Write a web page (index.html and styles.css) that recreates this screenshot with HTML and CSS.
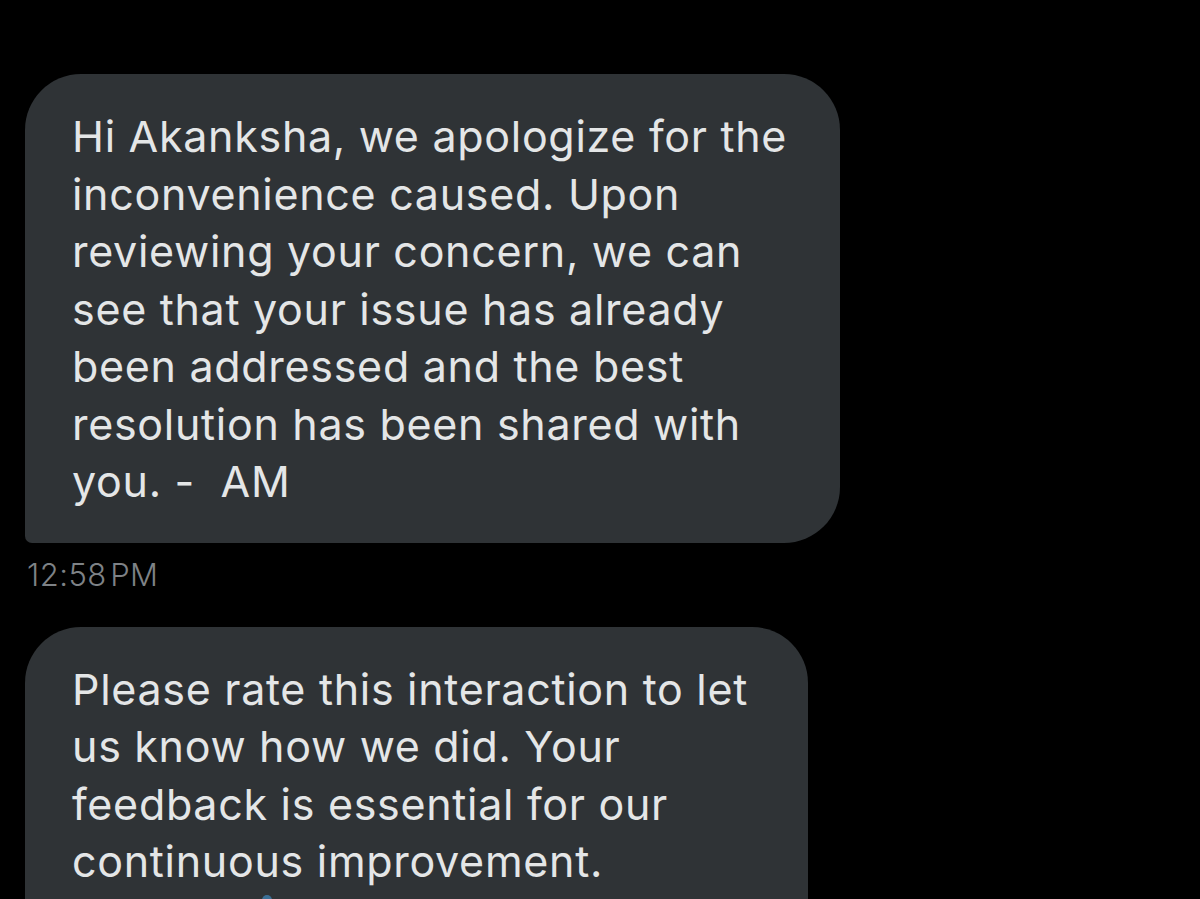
FILE: index.html
```html
<!DOCTYPE html>
<html lang="en">
<head>
  <meta charset="UTF-8">
  <title>Messages</title>
  <link rel="stylesheet" href="styles.css">
</head>
<body>
  <div class="thread">
    <div class="msg">
      <div class="bubble bubble-first">
        Hi Akanksha, we apologize for the<br>
        inconvenience caused. Upon<br>
        reviewing your concern, we can<br>
        see that your issue has already<br>
        been addressed and the best<br>
        resolution has been shared with<br>
        you. -&nbsp; AM
      </div>
      <div class="time">12:58&#8202;PM</div>
    </div>
    <div class="msg">
      <div class="bubble bubble-second">
        Please rate this interaction to let<br>
        us know how we did. Your<br>
        feedback is essential for our<br>
        continuous improvement.<br>
        <span class="link-peek"></span>
      </div>
    </div>
  </div>
</body>
</html>
```

FILE: styles.css
```css
html, body {
  margin: 0;
  padding: 0;
  background: #000;
  height: 100%;
  overflow: hidden;
}
body {
  font-family: Inter, Roboto, 'Liberation Sans', Arial, sans-serif;
}
.thread {
  padding: 74px 0 0 25px;
  display: flex;
  flex-direction: column;
}
.msg {
  display: flex;
  flex-direction: column;
  align-items: flex-start;
}
.bubble {
  background: #2f3336;
  color: #e4e6e7;
  font-size: 43px;
  font-weight: 380;
  letter-spacing: 0.7px;
  line-height: 57.5px;
  padding: 34px 20px 32px 47px;
  border-radius: 56px 56px 56px 7px;
  box-sizing: border-box;
}
.bubble-first {
  width: 815px;
}
.bubble-second {
  width: 783px;
  height: 400px;
}
.time {
  color: #7e8286;
  font-size: 31px;
  font-weight: 350;
  letter-spacing: 0.5px;
  line-height: 36px;
  margin: 14px 0 34px 2px;
}
.link-peek {
  display: inline-block;
  width: 10px;
  height: 10px;
  border-radius: 50%;
  background: #3a6f96;
  margin-left: 190px;
  vertical-align: top;
  margin-top: 4px;
}
```
